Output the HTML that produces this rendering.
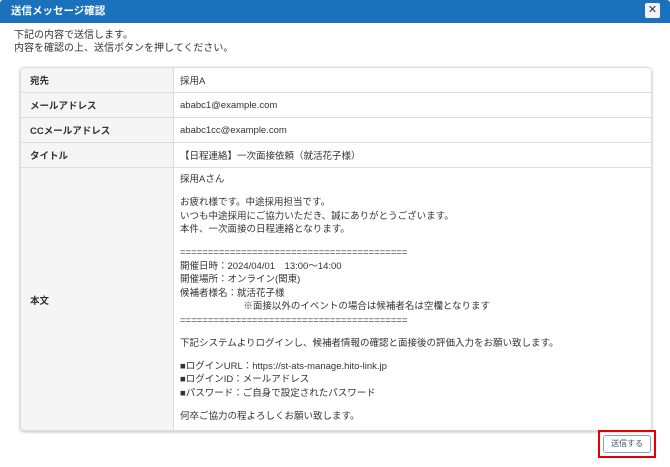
<!DOCTYPE html>
<html><head><meta charset="utf-8"><style>
*{margin:0;padding:0;box-sizing:border-box}
body{width:670px;height:467px;background:#fff;font-family:"Liberation Sans","Noto Sans CJK JP",sans-serif;color:#333;position:relative;overflow:hidden}
.hd{position:absolute;left:0;top:0;width:670px;height:23px;background:#1a72bd;color:#fff;font-weight:bold;font-size:10.5px;line-height:23px;padding-left:11px;border-radius:3px 3px 0 0}
.x{position:absolute;right:10px;top:3px;width:15px;height:15px;background:#f2f2f2;border-radius:2px;color:#333;font-size:11px;line-height:15px;text-align:center;font-weight:normal}
.intro{position:absolute;left:14px;top:29px;font-size:10px;line-height:13px;color:#333}
.tbl{position:absolute;left:20px;top:67px;width:632px;height:364px;border:1px solid #ddd;border-radius:4px;box-shadow:0 1px 3px rgba(0,0,0,.25);overflow:hidden}
.row{position:absolute;left:0;width:100%;border-bottom:1px solid #ddd;font-size:9.5px}
.lb{position:absolute;left:0;top:0;bottom:0;width:153px;background:#f5f5f5;border-right:1px solid #ddd;font-weight:bold;padding-left:9px;display:flex;align-items:center}
.vl{position:absolute;left:159px;top:0;bottom:0;display:flex;align-items:center}
.body{position:absolute;left:159px;top:5px;font-size:9.5px;line-height:13.5px;white-space:pre}
.sp{height:9.5px}
.btn{position:absolute;left:603px;top:435px;width:48px;height:18px;border:1px solid #7aa4c8;border-radius:3px;background:#fff;font-size:8px;color:#456;text-align:center;line-height:16px}
.red{position:absolute;left:598px;top:430px;width:58px;height:28px;border:2px solid #e60000}
</style></head><body>
<div class="hd">送信メッセージ確認<div class="x">✕</div></div>
<div class="intro">下記の内容で送信します。<br>内容を確認の上、送信ボタンを押してください。</div>
<div class="tbl">
<div class="row" style="top:0;height:25px"><div class="lb">宛先</div><div class="vl">採用A</div></div>
<div class="row" style="top:25px;height:25px"><div class="lb">メールアドレス</div><div class="vl">ababc1@example.com</div></div>
<div class="row" style="top:50px;height:25px"><div class="lb">CCメールアドレス</div><div class="vl">ababc1cc@example.com</div></div>
<div class="row" style="top:75px;height:25px"><div class="lb">タイトル</div><div class="vl">【日程連絡】一次面接依頼（就活花子様）</div></div>
<div class="row" style="top:100px;height:264px;border-bottom:none"><div class="lb">本文</div>
<div class="body"><div>採用Aさん</div><div class="sp"></div><div>お疲れ様です。中途採用担当です。</div><div>いつも中途採用にご協力いただき、誠にありがとうございます。</div><div>本件、一次面接の日程連絡となります。</div><div class="sp"></div><div>=========================================</div><div>開催日時：2024/04/01　13:00〜14:00</div><div>開催場所：オンライン(関東)</div><div>候補者様名：就活花子様</div><div>                        ※面接以外のイベントの場合は候補者名は空欄となります</div><div>=========================================</div><div class="sp"></div><div>下記システムよりログインし、候補者情報の確認と面接後の評価入力をお願い致します。</div><div class="sp"></div><div>■ログインURL：https://st-ats-manage.hito-link.jp</div><div>■ログインID：メールアドレス</div><div>■パスワード：ご自身で設定されたパスワード</div><div class="sp"></div><div>何卒ご協力の程よろしくお願い致します。</div></div>
</div>
</div>
<div class="red"></div>
<div class="btn">送信する</div>
</body></html>
